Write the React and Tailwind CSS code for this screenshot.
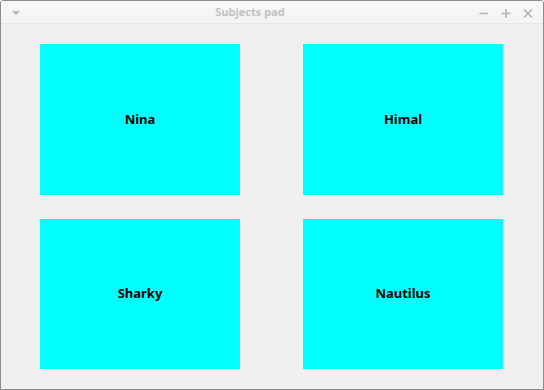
import React from 'react';

const subjects = ['Nina', 'Himal', 'Sharky', 'Nautilus'];

function TitleBar() {
  return (
    <div className="h-[23px] flex items-center px-[9px] bg-gradient-to-b from-[#f8f8f7] to-[#f3f3f2] border-b border-[#e6e6e6]">
      <svg width="12" height="12" viewBox="0 0 12 12" className="mt-[2px]">
        <path d="M2 4 L10 4 L6 8 Z" fill="#b8b8b8" />
      </svg>
      <span className="flex-1 text-center text-[11px] font-bold text-[#c2c2c2] mt-[1px]">Subjects pad</span>
      <div className="flex items-center gap-[10px] text-[#b5b5b5] mt-[1px]">
        <svg width="12" height="12" viewBox="0 0 12 12">
          <path d="M1.5 6.5 H10" stroke="currentColor" strokeWidth="1.6" />
        </svg>
        <svg width="12" height="12" viewBox="0 0 12 12">
          <path d="M1.5 6.5 H10.5 M6 2 V11" stroke="currentColor" strokeWidth="1.6" />
        </svg>
        <svg width="12" height="12" viewBox="0 0 12 12">
          <path d="M2 2.5 L10 10.5 M10 2.5 L2 10.5" stroke="currentColor" strokeWidth="1.6" />
        </svg>
      </div>
    </div>
  );
}

export default function App() {
  return (
    <div className="w-[544px] h-[390px] bg-[#efefef] border border-[#8c8c8c] rounded-t-[3px] overflow-hidden flex flex-col" style={{ fontFamily: '"Noto Sans", "Open Sans", sans-serif' }}>
      <TitleBar />
      <div className="flex-1 grid grid-cols-[200px_200px] grid-rows-[151px_150px] gap-x-[63px] gap-y-[24px] pl-[39px] pt-[20px]">
        {subjects.map((name) => (
          <div key={name} className="bg-[#00ffff] flex items-center justify-center text-[13px] font-bold text-black">
            {name}
          </div>
        ))}
      </div>
    </div>
  );
}
